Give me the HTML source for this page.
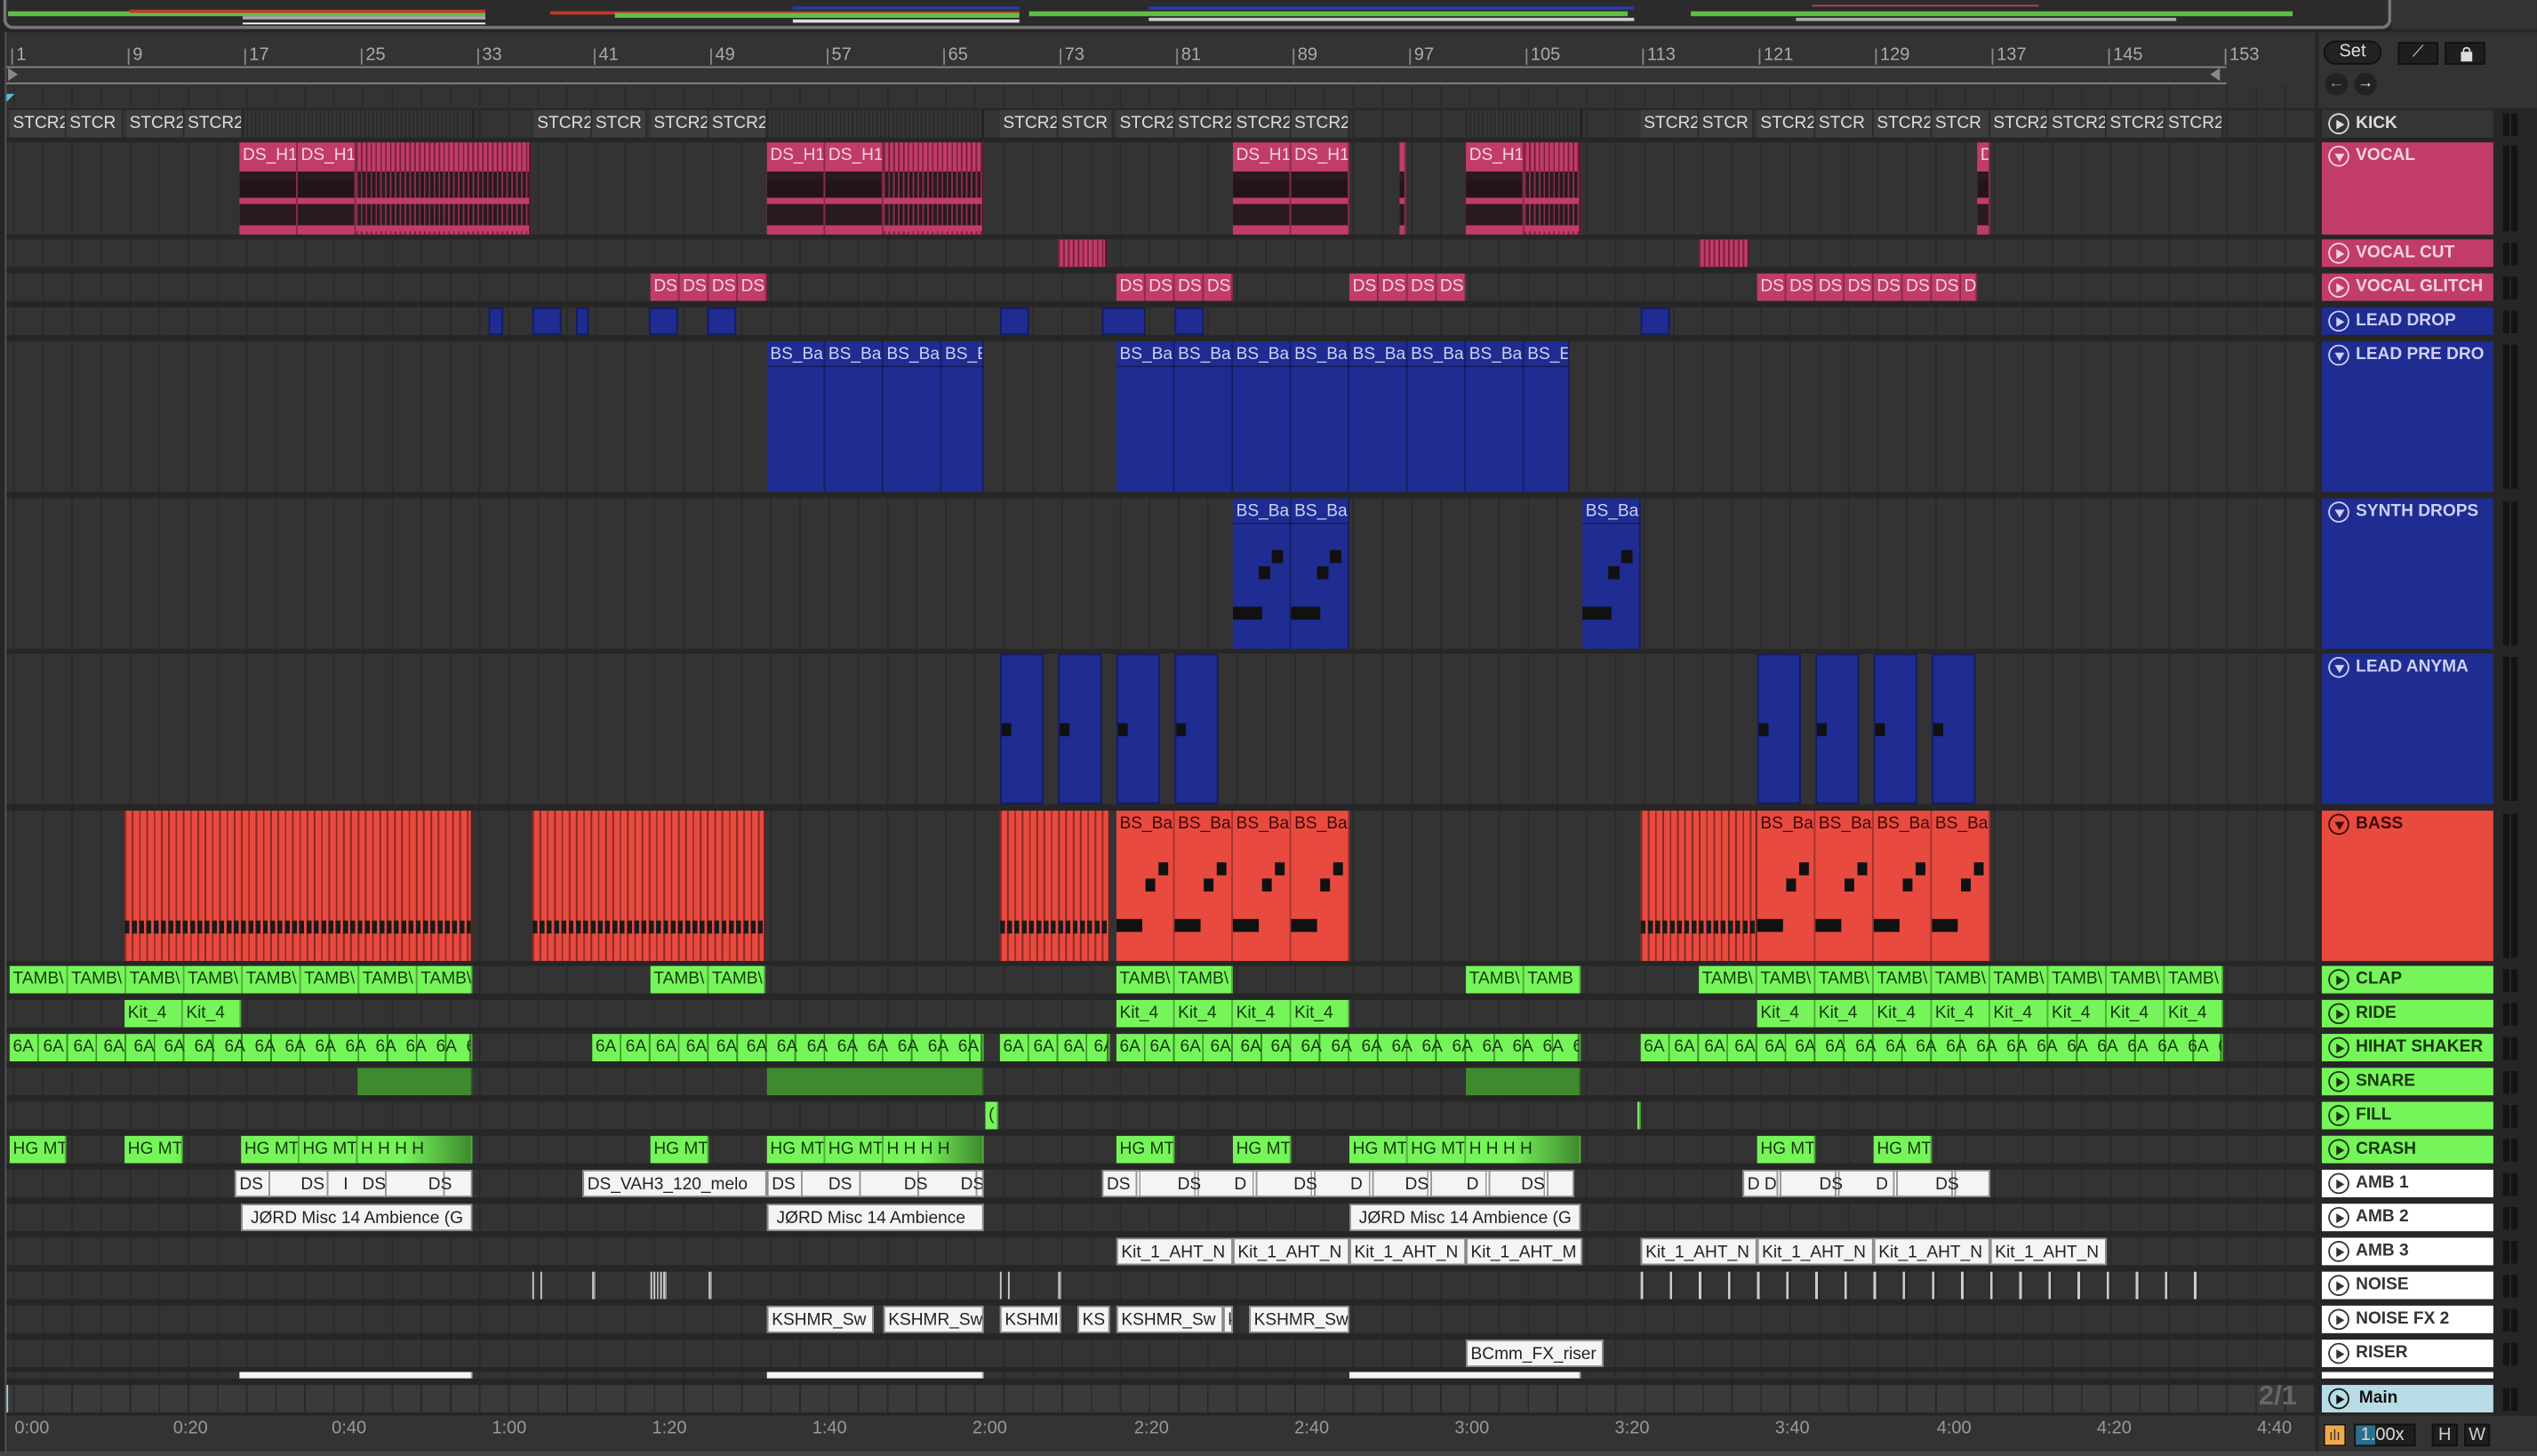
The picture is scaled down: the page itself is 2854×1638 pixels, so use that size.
<!DOCTYPE html>
<html><head><meta charset="utf-8"><style>
*{margin:0;padding:0;box-sizing:border-box}
html,body{width:2854px;height:1638px;overflow:hidden;background:#262626}
#s{position:absolute;left:0;top:0;width:1568px;height:900px;transform:scale(1.82015);transform-origin:0 0;font-family:"Liberation Sans",sans-serif;background:#262626}
.a{position:absolute}
.row{position:absolute;left:4px;width:1427px;background-color:#333;background-image:repeating-linear-gradient(90deg,#2a2a2a 0 1px,transparent 1px 18px);background-position:4px 0;overflow:hidden}
.c{position:absolute;top:0;bottom:0;overflow:hidden;white-space:nowrap;font-size:10.5px;line-height:16px;padding-left:2px;border-right:1px solid rgba(0,0,0,.3)}
.g{background:#3d3d3d;color:#ddd}
.st{background:#363636 repeating-linear-gradient(90deg,#2a2a2a 0 1px,transparent 1px 2.5px)}
.p{background:#c13c6b;color:#f3d3e0}
.pw{background:#c13c6b;color:#f3d3e0}
.pw:after{content:"";position:absolute;left:0;right:0;top:18px;bottom:2px;background:linear-gradient(#2a1a20 0 16%,#241419 16% 44%,#c13c6b 44% 54%,#2a1a20 54% 90%,#c13c6b 90%)}
.pw.ps:after{background:repeating-linear-gradient(90deg,rgba(193,60,107,.6) 0 1px,transparent 1px 3px),linear-gradient(#2a1a20 0 44%,#c13c6b 44% 54%,#2a1a20 54% 90%,#c13c6b 90%)}
.ps{background:#c13c6b repeating-linear-gradient(90deg,#7a1f40 0 1px,transparent 1px 3px)}
.b{background:#1f2c91;color:#cdd0f2;border:1px solid #141c60}
.bb{background:linear-gradient(#1f2c91 0 15px,#141c60 15px 16px,#1f2c91 16px);color:#cdd0f2}
.r{background:#e84a40;color:#3a0a08}
.rs{background:#e84a40 repeating-linear-gradient(90deg,#8a2a22 0 1px,transparent 1px 4.5px)}
.gr{background:#76f55a;color:#17380e}
.dg{background:#3f8a2e}
.w{background:#f4f4f4;color:#222;border:1px solid #888}
.h{position:absolute;left:1435px;width:106px;font-weight:bold;font-size:10.5px;line-height:17px;padding-left:21px;white-space:nowrap;overflow:hidden}
.h i{position:absolute;left:4px;top:2px;width:13px;height:13px;border:1.3px solid currentColor;border-radius:50%}
.h i:after{content:"";position:absolute;left:4px;top:2.5px;border-left:5px solid currentColor;border-top:3.5px solid transparent;border-bottom:3.5px solid transparent}
.h i.d:after{left:2.5px;top:4px;border-top:5px solid currentColor;border-left:3.5px solid transparent;border-right:3.5px solid transparent;border-bottom:0}
.m{position:absolute;left:1547px;width:9px;background:linear-gradient(90deg,#141414 0 4px,transparent 4px 5px,#141414 5px 9px)}
.rl{position:absolute;top:28px;font-size:11px;color:#aaa}
.rl:before{content:"";position:absolute;left:-3px;top:2px;width:1px;height:10px;background:#888}
.tl{position:absolute;top:877px;font-size:11px;color:#999}
</style></head><body><div id="s">

<!-- overview -->
<div class="a" style="left:2px;top:0;width:1476px;height:18px;border:2px solid #777;border-top:0;border-radius:0 0 6px 6px;background:#2b2b2b"></div>
<div class="a" style="left:1478px;top:0;width:90px;height:18px;background:#333"></div>
<div class="a" style="left:5px;top:7px;width:295px;height:3px;background:#5fbf45"></div>
<div class="a" style="left:80px;top:6px;width:220px;height:2px;background:#c0392b"></div>
<div class="a" style="left:150px;top:10px;width:150px;height:2px;background:#aaa"></div>
<div class="a" style="left:150px;top:14px;width:150px;height:1px;background:#fff"></div>
<div class="a" style="left:340px;top:7px;width:290px;height:2px;background:#c0392b"></div>
<div class="a" style="left:380px;top:8px;width:250px;height:3px;background:#5fbf45"></div>
<div class="a" style="left:490px;top:4px;width:140px;height:2px;background:#2a3aa8"></div>
<div class="a" style="left:490px;top:12px;width:140px;height:2px;background:#ddd"></div>
<div class="a" style="left:636px;top:7px;width:370px;height:3px;background:#5fbf45"></div>
<div class="a" style="left:710px;top:4px;width:300px;height:2px;background:#2a3aa8"></div>
<div class="a" style="left:710px;top:11px;width:300px;height:2px;background:#ccc"></div>
<div class="a" style="left:1045px;top:7px;width:372px;height:3px;background:#5fbf45"></div>
<div class="a" style="left:1120px;top:3px;width:140px;height:1px;background:#c13c6b"></div>
<div class="a" style="left:1110px;top:11px;width:235px;height:2px;background:#aaa"></div>

<!-- ruler -->
<div class="a" style="left:4px;top:20px;width:1427px;height:47px;background:#333"></div>
<div class="rl" style="left:10px">1</div><div class="rl" style="left:82px">9</div><div class="rl" style="left:154px">17</div><div class="rl" style="left:226px">25</div><div class="rl" style="left:298px">33</div><div class="rl" style="left:370px">41</div><div class="rl" style="left:442px">49</div><div class="rl" style="left:514px">57</div><div class="rl" style="left:586px">65</div><div class="rl" style="left:658px">73</div><div class="rl" style="left:730px">81</div><div class="rl" style="left:802px">89</div><div class="rl" style="left:874px">97</div><div class="rl" style="left:946px">105</div><div class="rl" style="left:1018px">113</div><div class="rl" style="left:1090px">121</div><div class="rl" style="left:1162px">129</div><div class="rl" style="left:1234px">137</div><div class="rl" style="left:1306px">145</div><div class="rl" style="left:1378px">153</div>
<div class="a" style="left:4px;top:41px;width:1372px;height:11px;border-top:1px solid #888;border-bottom:1px solid #888"></div>
<div class="a" style="left:5px;top:42px;width:0;height:0;border-left:6px solid #888;border-top:4px solid transparent;border-bottom:4px solid transparent"></div>
<div class="a" style="left:1366px;top:42px;width:0;height:0;border-right:6px solid #888;border-top:4px solid transparent;border-bottom:4px solid transparent"></div>
<div class="a" style="left:4px;top:53px;width:1427px;height:13px;background:#333;background-image:repeating-linear-gradient(90deg,#2a2a2a 0 1px,transparent 1px 18px);background-position:4px 0"></div>
<div class="a" style="left:4px;top:58px;border-left:5px solid #4fc3e0;border-bottom:5px solid transparent"></div>
<div class="a" style="left:1433px;top:20px;width:135px;height:47px;background:#333"></div>
<div class="a" style="left:1436px;top:25px;width:36px;height:15px;border-radius:8px;background:#222;border:1px solid #111;color:#ddd;font-size:11px;text-align:center;line-height:13px">Set</div>
<div class="a" style="left:1482px;top:26px;width:25px;height:14px;background:#1e1e1e;border:1px solid #111;color:#ddd;font-size:10px;text-align:center;line-height:12px">⟋</div>
<div class="a" style="left:1511px;top:26px;width:25px;height:14px;background:#1e1e1e;border:1px solid #111"><div class="a" style="left:9px;top:5px;width:7px;height:6px;background:#ddd"></div><div class="a" style="left:10px;top:2px;width:5px;height:5px;border:1.3px solid #ddd;border-bottom:0;border-radius:3px 3px 0 0"></div></div>
<div class="a" style="left:1437px;top:45px;width:14px;height:14px;border-radius:50%;background:#222;color:#888;font-size:10px;text-align:center;line-height:14px">←</div>
<div class="a" style="left:1455px;top:45px;width:14px;height:14px;border-radius:50%;background:#222;color:#ddd;font-size:10px;text-align:center;line-height:14px">→</div>

<!-- KICK -->
<div class="row" style="top:68px;height:17px">
<div class="c g" style="left:2px;width:35px">STCR2</div><div class="c g" style="left:37px;width:35px">STCR</div><div class="c g" style="left:74px;width:36px">STCR2</div><div class="c g" style="left:110px;width:36px">STCR2</div><div class="c st" style="left:146px;width:143px"></div>
<div class="c g" style="left:326px;width:36px">STCR2</div><div class="c g" style="left:362px;width:34px">STCR</div><div class="c g" style="left:398px;width:36px">STCR2</div><div class="c g" style="left:434px;width:36px">STCR2</div><div class="c st" style="left:470px;width:134px"></div>
<div class="c g" style="left:614px;width:36px">STCR2</div><div class="c g" style="left:650px;width:34px">STCR</div><div class="c g" style="left:686px;width:36px">STCR2</div><div class="c g" style="left:722px;width:36px">STCR2</div><div class="c g" style="left:758px;width:36px">STCR2</div><div class="c g" style="left:794px;width:36px">STCR2</div><div class="c st" style="left:902px;width:72px"></div>
<div class="c g" style="left:1010px;width:36px">STCR2</div><div class="c g" style="left:1046px;width:34px">STCR</div><div class="c g" style="left:1082px;width:36px">STCR2</div><div class="c g" style="left:1118px;width:36px">STCR</div><div class="c g" style="left:1154px;width:36px">STCR2</div><div class="c g" style="left:1190px;width:36px">STCR</div><div class="c g" style="left:1226px;width:36px">STCR2</div><div class="c g" style="left:1262px;width:36px">STCR2</div><div class="c g" style="left:1298px;width:36px">STCR2</div><div class="c g" style="left:1334px;width:36px">STCR2</div>
</div>

<!-- VOCAL -->
<div class="row" style="top:88px;height:57px">
<div class="c pw" style="left:144px;width:36px">DS_H1</div><div class="c pw" style="left:180px;width:36px">DS_H1</div><div class="c ps pw" style="left:216px;width:108px"></div>
<div class="c pw" style="left:470px;width:36px">DS_H1</div><div class="c pw" style="left:506px;width:36px">DS_H1</div><div class="c ps pw" style="left:542px;width:62px"></div>
<div class="c pw" style="left:758px;width:36px">DS_H1</div><div class="c pw" style="left:794px;width:36px">DS_H1</div>
<div class="c pw" style="left:861px;width:4px"></div>
<div class="c pw" style="left:902px;width:36px">DS_H1</div><div class="c ps pw" style="left:938px;width:35px"></div>
<div class="c pw" style="left:1218px;width:8px">D</div>
</div>
<!-- VOCAL CUT -->
<div class="row" style="top:148px;height:17px">
<div class="c ps" style="left:650px;width:30px"></div><div class="c ps" style="left:1046px;width:31px"></div>
</div>
<!-- VOCAL GLITCH -->
<div class="row" style="top:169px;height:17px">
<div class="c p" style="left:398px;width:18px">DS</div><div class="c p" style="left:416px;width:18px">DS</div><div class="c p" style="left:434px;width:18px">DS</div><div class="c p" style="left:452px;width:18px">DS</div>
<div class="c p" style="left:686px;width:18px">DS</div><div class="c p" style="left:704px;width:18px">DS</div><div class="c p" style="left:722px;width:18px">DS</div><div class="c p" style="left:740px;width:18px">DS</div>
<div class="c p" style="left:830px;width:18px">DS</div><div class="c p" style="left:848px;width:18px">DS</div><div class="c p" style="left:866px;width:18px">DS</div><div class="c p" style="left:884px;width:18px">DS</div>
<div class="c p" style="left:1082px;width:18px">DS</div><div class="c p" style="left:1100px;width:18px">DS</div><div class="c p" style="left:1118px;width:18px">DS</div><div class="c p" style="left:1136px;width:18px">DS</div><div class="c p" style="left:1154px;width:18px">DS</div><div class="c p" style="left:1172px;width:18px">DS</div><div class="c p" style="left:1190px;width:18px">DS</div><div class="c p" style="left:1208px;width:10px">D</div>
</div>
<!-- LEAD DROP -->
<div class="row" style="top:190px;height:17px">
<div class="c b" style="left:298px;width:9px"></div><div class="c b" style="left:325px;width:18px"></div><div class="c b" style="left:352px;width:8px"></div><div class="c b" style="left:397px;width:18px"></div><div class="c b" style="left:433px;width:18px"></div><div class="c b" style="left:614px;width:18px"></div><div class="c b" style="left:677px;width:27px"></div><div class="c b" style="left:722px;width:18px"></div><div class="c b" style="left:1010px;width:18px"></div>
</div>
<!-- LEAD PRE DRO -->
<div class="row" style="top:211px;height:93px">
<div class="c bb" style="left:470px;width:36px">BS_Ba</div><div class="c bb" style="left:506px;width:36px">BS_Ba</div><div class="c bb" style="left:542px;width:36px">BS_Ba</div><div class="c bb" style="left:578px;width:26px">BS_E</div>
<div class="c bb" style="left:686px;width:36px">BS_Ba</div><div class="c bb" style="left:722px;width:36px">BS_Ba</div><div class="c bb" style="left:758px;width:36px">BS_Ba</div><div class="c bb" style="left:794px;width:36px">BS_Ba</div><div class="c bb" style="left:830px;width:36px">BS_Ba</div><div class="c bb" style="left:866px;width:36px">BS_Ba</div><div class="c bb" style="left:902px;width:36px">BS_Ba</div><div class="c bb" style="left:938px;width:28px">BS_E</div>
</div>
<!-- SYNTH DROPS -->
<div class="row" style="top:308px;height:93px">
<div class="c bb" style="left:758px;width:36px">BS_Ba<div class="a" style="left:24px;top:32px;width:7px;height:8px;background:#111"></div><div class="a" style="left:16px;top:42px;width:7px;height:8px;background:#111"></div><div class="a" style="left:0;top:67px;width:18px;height:8px;background:#111"></div></div>
<div class="c bb" style="left:794px;width:36px">BS_Ba<div class="a" style="left:24px;top:32px;width:7px;height:8px;background:#111"></div><div class="a" style="left:16px;top:42px;width:7px;height:8px;background:#111"></div><div class="a" style="left:0;top:67px;width:18px;height:8px;background:#111"></div></div>
<div class="c bb" style="left:974px;width:36px">BS_Ba<div class="a" style="left:24px;top:32px;width:7px;height:8px;background:#111"></div><div class="a" style="left:16px;top:42px;width:7px;height:8px;background:#111"></div><div class="a" style="left:0;top:67px;width:18px;height:8px;background:#111"></div></div>
</div>
<!-- LEAD ANYMA -->
<div class="row" style="top:404px;height:93px">
<div class="c b" style="left:614px;width:27px"><div class="a" style="left:0;top:42px;width:6px;height:8px;background:#111"></div></div>
<div class="c b" style="left:650px;width:27px"><div class="a" style="left:0;top:42px;width:6px;height:8px;background:#111"></div></div>
<div class="c b" style="left:686px;width:27px"><div class="a" style="left:0;top:42px;width:6px;height:8px;background:#111"></div></div>
<div class="c b" style="left:722px;width:27px"><div class="a" style="left:0;top:42px;width:6px;height:8px;background:#111"></div></div>
<div class="c b" style="left:1082px;width:27px"><div class="a" style="left:0;top:42px;width:6px;height:8px;background:#111"></div></div>
<div class="c b" style="left:1118px;width:27px"><div class="a" style="left:0;top:42px;width:6px;height:8px;background:#111"></div></div>
<div class="c b" style="left:1154px;width:27px"><div class="a" style="left:0;top:42px;width:6px;height:8px;background:#111"></div></div>
<div class="c b" style="left:1190px;width:27px"><div class="a" style="left:0;top:42px;width:6px;height:8px;background:#111"></div></div>
</div>
<!-- BASS -->
<div class="row" style="top:501px;height:93px">
<div class="c rs" style="left:73px;width:215px"><div class="a" style="left:0;right:0;top:68px;height:8px;background:repeating-linear-gradient(90deg,#1a1a1a 0 3px,transparent 3px 4.5px)"></div></div>
<div class="c rs" style="left:325px;width:144px"><div class="a" style="left:0;right:0;top:68px;height:8px;background:repeating-linear-gradient(90deg,#1a1a1a 0 3px,transparent 3px 4.5px)"></div></div>
<div class="c rs" style="left:614px;width:68px"><div class="a" style="left:0;right:0;top:68px;height:8px;background:repeating-linear-gradient(90deg,#1a1a1a 0 3px,transparent 3px 4.5px)"></div></div>
<div class="c r" style="left:686px;width:36px">BS_Ba<div class="a" style="left:26px;top:32px;width:6px;height:8px;background:#111"></div><div class="a" style="left:18px;top:42px;width:6px;height:8px;background:#111"></div><div class="a" style="left:0;top:67px;width:16px;height:8px;background:#111"></div></div>
<div class="c r" style="left:722px;width:36px">BS_Ba<div class="a" style="left:26px;top:32px;width:6px;height:8px;background:#111"></div><div class="a" style="left:18px;top:42px;width:6px;height:8px;background:#111"></div><div class="a" style="left:0;top:67px;width:16px;height:8px;background:#111"></div></div>
<div class="c r" style="left:758px;width:36px">BS_Ba<div class="a" style="left:26px;top:32px;width:6px;height:8px;background:#111"></div><div class="a" style="left:18px;top:42px;width:6px;height:8px;background:#111"></div><div class="a" style="left:0;top:67px;width:16px;height:8px;background:#111"></div></div>
<div class="c r" style="left:794px;width:36px">BS_Ba<div class="a" style="left:26px;top:32px;width:6px;height:8px;background:#111"></div><div class="a" style="left:18px;top:42px;width:6px;height:8px;background:#111"></div><div class="a" style="left:0;top:67px;width:16px;height:8px;background:#111"></div></div>
<div class="c rs" style="left:1010px;width:72px"><div class="a" style="left:0;right:0;top:68px;height:8px;background:repeating-linear-gradient(90deg,#1a1a1a 0 3px,transparent 3px 4.5px)"></div></div>
<div class="c r" style="left:1082px;width:36px">BS_Ba<div class="a" style="left:26px;top:32px;width:6px;height:8px;background:#111"></div><div class="a" style="left:18px;top:42px;width:6px;height:8px;background:#111"></div><div class="a" style="left:0;top:67px;width:16px;height:8px;background:#111"></div></div>
<div class="c r" style="left:1118px;width:36px">BS_Ba<div class="a" style="left:26px;top:32px;width:6px;height:8px;background:#111"></div><div class="a" style="left:18px;top:42px;width:6px;height:8px;background:#111"></div><div class="a" style="left:0;top:67px;width:16px;height:8px;background:#111"></div></div>
<div class="c r" style="left:1154px;width:36px">BS_Ba<div class="a" style="left:26px;top:32px;width:6px;height:8px;background:#111"></div><div class="a" style="left:18px;top:42px;width:6px;height:8px;background:#111"></div><div class="a" style="left:0;top:67px;width:16px;height:8px;background:#111"></div></div>
<div class="c r" style="left:1190px;width:36px">BS_Ba<div class="a" style="left:26px;top:32px;width:6px;height:8px;background:#111"></div><div class="a" style="left:18px;top:42px;width:6px;height:8px;background:#111"></div><div class="a" style="left:0;top:67px;width:16px;height:8px;background:#111"></div></div>
</div>
<!-- CLAP -->
<div class="row" style="top:597px;height:17px">
<div class="c gr" style="left:2px;width:36px">TAMB\</div><div class="c gr" style="left:38px;width:36px">TAMB\</div><div class="c gr" style="left:74px;width:36px">TAMB\</div><div class="c gr" style="left:110px;width:36px">TAMB\</div><div class="c gr" style="left:146px;width:36px">TAMB\</div><div class="c gr" style="left:182px;width:36px">TAMB\</div><div class="c gr" style="left:218px;width:36px">TAMB\</div><div class="c gr" style="left:254px;width:34px">TAMB\</div>
<div class="c gr" style="left:398px;width:36px">TAMB\</div><div class="c gr" style="left:434px;width:35px">TAMB\</div>
<div class="c gr" style="left:686px;width:36px">TAMB\</div><div class="c gr" style="left:722px;width:36px">TAMB\</div>
<div class="c gr" style="left:902px;width:36px">TAMB\</div><div class="c gr" style="left:938px;width:35px">TAMB</div>
<div class="c gr" style="left:1046px;width:36px">TAMB\</div><div class="c gr" style="left:1082px;width:36px">TAMB\</div><div class="c gr" style="left:1118px;width:36px">TAMB\</div><div class="c gr" style="left:1154px;width:36px">TAMB\</div><div class="c gr" style="left:1190px;width:36px">TAMB\</div><div class="c gr" style="left:1226px;width:36px">TAMB\</div><div class="c gr" style="left:1262px;width:36px">TAMB\</div><div class="c gr" style="left:1298px;width:36px">TAMB\</div><div class="c gr" style="left:1334px;width:36px">TAMB\</div>
</div>
<!-- RIDE -->
<div class="row" style="top:618px;height:17px">
<div class="c gr" style="left:73px;width:36px">Kit_4</div><div class="c gr" style="left:109px;width:36px">Kit_4</div>
<div class="c gr" style="left:686px;width:36px">Kit_4</div><div class="c gr" style="left:722px;width:36px">Kit_4</div><div class="c gr" style="left:758px;width:36px">Kit_4</div><div class="c gr" style="left:794px;width:36px">Kit_4</div>
<div class="c gr" style="left:1082px;width:36px">Kit_4</div><div class="c gr" style="left:1118px;width:36px">Kit_4</div><div class="c gr" style="left:1154px;width:36px">Kit_4</div><div class="c gr" style="left:1190px;width:36px">Kit_4</div><div class="c gr" style="left:1226px;width:36px">Kit_4</div><div class="c gr" style="left:1262px;width:36px">Kit_4</div><div class="c gr" style="left:1298px;width:36px">Kit_4</div><div class="c gr" style="left:1334px;width:36px">Kit_4</div>
</div>
<!-- HIHAT -->
<div class="row" style="top:639px;height:17px">
<div class="c gr" style="left:2px;width:286px;background:#76f55a repeating-linear-gradient(90deg,#3a8a2a 0 1px,transparent 1px 18px);background-position:-1px 0">6A&nbsp;&nbsp;6A&nbsp;&nbsp;6A&nbsp;&nbsp;6A&nbsp;&nbsp;6A&nbsp;&nbsp;6A&nbsp;&nbsp;6A&nbsp;&nbsp;6A&nbsp;&nbsp;6A&nbsp;&nbsp;6A&nbsp;&nbsp;6A&nbsp;&nbsp;6A&nbsp;&nbsp;6A&nbsp;&nbsp;6A&nbsp;&nbsp;6A&nbsp;&nbsp;6A</div>
<div class="c gr" style="left:362px;width:242px;background:#76f55a repeating-linear-gradient(90deg,#3a8a2a 0 1px,transparent 1px 18px);background-position:-1px 0">6A&nbsp;&nbsp;6A&nbsp;&nbsp;6A&nbsp;&nbsp;6A&nbsp;&nbsp;6A&nbsp;&nbsp;6A&nbsp;&nbsp;6A&nbsp;&nbsp;6A&nbsp;&nbsp;6A&nbsp;&nbsp;6A&nbsp;&nbsp;6A&nbsp;&nbsp;6A&nbsp;&nbsp;6A&nbsp;&nbsp;6A</div>
<div class="c gr" style="left:614px;width:68px;background:#76f55a repeating-linear-gradient(90deg,#3a8a2a 0 1px,transparent 1px 18px);background-position:-1px 0">6A&nbsp;&nbsp;6A&nbsp;&nbsp;6A&nbsp;&nbsp;6A</div>
<div class="c gr" style="left:686px;width:287px;background:#76f55a repeating-linear-gradient(90deg,#3a8a2a 0 1px,transparent 1px 18px);background-position:-1px 0">6A&nbsp;&nbsp;6A&nbsp;&nbsp;6A&nbsp;&nbsp;6A&nbsp;&nbsp;6A&nbsp;&nbsp;6A&nbsp;&nbsp;6A&nbsp;&nbsp;6A&nbsp;&nbsp;6A&nbsp;&nbsp;6A&nbsp;&nbsp;6A&nbsp;&nbsp;6A&nbsp;&nbsp;6A&nbsp;&nbsp;6A&nbsp;&nbsp;6A&nbsp;&nbsp;6A</div>
<div class="c gr" style="left:1010px;width:360px;background:#76f55a repeating-linear-gradient(90deg,#3a8a2a 0 1px,transparent 1px 18px);background-position:-1px 0">6A&nbsp;&nbsp;6A&nbsp;&nbsp;6A&nbsp;&nbsp;6A&nbsp;&nbsp;6A&nbsp;&nbsp;6A&nbsp;&nbsp;6A&nbsp;&nbsp;6A&nbsp;&nbsp;6A&nbsp;&nbsp;6A&nbsp;&nbsp;6A&nbsp;&nbsp;6A&nbsp;&nbsp;6A&nbsp;&nbsp;6A&nbsp;&nbsp;6A&nbsp;&nbsp;6A&nbsp;&nbsp;6A&nbsp;&nbsp;6A&nbsp;&nbsp;6A&nbsp;&nbsp;6A</div>
</div>
<!-- SNARE -->
<div class="row" style="top:660px;height:17px">
<div class="c dg" style="left:217px;width:71px"></div><div class="c dg" style="left:470px;width:134px"></div><div class="c dg" style="left:902px;width:71px"></div>
</div>
<!-- FILL -->
<div class="row" style="top:681px;height:17px">
<div class="c gr" style="left:605px;width:8px">(</div><div class="c gr" style="left:1008px;width:2px;padding:0"></div>
</div>
<!-- CRASH -->
<div class="row" style="top:702px;height:17px">
<div class="c gr" style="left:2px;width:35px">HG MT</div><div class="c gr" style="left:73px;width:36px">HG MT</div><div class="c gr" style="left:145px;width:36px">HG MT</div><div class="c gr" style="left:181px;width:36px">HG MT</div><div class="c gr" style="left:217px;width:71px;background:#76f55a linear-gradient(90deg,transparent 40%,#3f8a2e)">H H H H</div>
<div class="c gr" style="left:398px;width:36px">HG MT</div>
<div class="c gr" style="left:470px;width:36px">HG MT</div><div class="c gr" style="left:506px;width:36px">HG MT</div><div class="c gr" style="left:542px;width:62px;background:#76f55a linear-gradient(90deg,transparent 40%,#3f8a2e)">H H H H</div>
<div class="c gr" style="left:686px;width:36px">HG MT</div><div class="c gr" style="left:758px;width:36px">HG MT</div>
<div class="c gr" style="left:830px;width:36px">HG MT</div><div class="c gr" style="left:866px;width:36px">HG MT</div><div class="c gr" style="left:902px;width:71px;background:#76f55a linear-gradient(90deg,transparent 40%,#3f8a2e)">H H H H</div>
<div class="c gr" style="left:1082px;width:36px">HG MT</div><div class="c gr" style="left:1154px;width:36px">HG MT</div>
</div>
<!-- AMB1 -->
<div class="row" style="top:723px;height:17px">
<div class="c w" style="left:141px;width:147px;background:#f4f4f4 repeating-linear-gradient(90deg,transparent 0 20px,#999 20px 21px,transparent 21px 36px)">DS&nbsp;&nbsp;&nbsp;&nbsp;&nbsp;&nbsp;&nbsp;&nbsp;DS&nbsp;&nbsp;&nbsp;&nbsp;I&nbsp;&nbsp;&nbsp;DS&nbsp;&nbsp;&nbsp;&nbsp;&nbsp;&nbsp;&nbsp;&nbsp;&nbsp;DS</div>
<div class="c w" style="left:356px;width:114px">DS_VAH3_120_melo</div>
<div class="c w" style="left:470px;width:134px;background:#f4f4f4 repeating-linear-gradient(90deg,transparent 0 20px,#999 20px 21px,transparent 21px 36px)">DS&nbsp;&nbsp;&nbsp;&nbsp;&nbsp;&nbsp;&nbsp;DS&nbsp;&nbsp;&nbsp;&nbsp;&nbsp;&nbsp;&nbsp;&nbsp;&nbsp;&nbsp;&nbsp;DS&nbsp;&nbsp;&nbsp;&nbsp;&nbsp;&nbsp;&nbsp;DS</div>
<div class="c w" style="left:677px;width:292px;background:#f4f4f4 repeating-linear-gradient(90deg,transparent 0 20px,#999 20px 21px,#fff 21px 22px,#999 22px 23px,transparent 23px 36px)">DS&nbsp;&nbsp;&nbsp;&nbsp;&nbsp;&nbsp;&nbsp;&nbsp;&nbsp;&nbsp;DS&nbsp;&nbsp;&nbsp;&nbsp;&nbsp;&nbsp;&nbsp;D&nbsp;&nbsp;&nbsp;&nbsp;&nbsp;&nbsp;&nbsp;&nbsp;&nbsp;&nbsp;DS&nbsp;&nbsp;&nbsp;&nbsp;&nbsp;&nbsp;&nbsp;D&nbsp;&nbsp;&nbsp;&nbsp;&nbsp;&nbsp;&nbsp;&nbsp;&nbsp;DS&nbsp;&nbsp;&nbsp;&nbsp;&nbsp;&nbsp;&nbsp;&nbsp;D&nbsp;&nbsp;&nbsp;&nbsp;&nbsp;&nbsp;&nbsp;&nbsp;&nbsp;DS</div>
<div class="c w" style="left:1073px;width:153px;background:#f4f4f4 repeating-linear-gradient(90deg,transparent 0 20px,#999 20px 21px,#fff 21px 22px,#999 22px 23px,transparent 23px 36px)">D D&nbsp;&nbsp;&nbsp;&nbsp;&nbsp;&nbsp;&nbsp;&nbsp;&nbsp;DS&nbsp;&nbsp;&nbsp;&nbsp;&nbsp;&nbsp;&nbsp;D&nbsp;&nbsp;&nbsp;&nbsp;&nbsp;&nbsp;&nbsp;&nbsp;&nbsp;&nbsp;DS</div>
</div>
<!-- AMB2 -->
<div class="row" style="top:744px;height:17px">
<div class="c w" style="left:145px;width:143px">&nbsp;JØRD Misc 14 Ambience (G</div><div class="c w" style="left:470px;width:134px">&nbsp;JØRD Misc 14 Ambience</div><div class="c w" style="left:830px;width:143px">&nbsp;JØRD Misc 14 Ambience (G</div>
</div>
<!-- AMB3 -->
<div class="row" style="top:765px;height:17px">
<div class="c w" style="left:686px;width:72px">Kit_1_AHT_N</div><div class="c w" style="left:758px;width:72px">Kit_1_AHT_N</div><div class="c w" style="left:830px;width:72px">Kit_1_AHT_N</div><div class="c w" style="left:902px;width:72px">Kit_1_AHT_M</div>
<div class="c w" style="left:1010px;width:72px">Kit_1_AHT_N</div><div class="c w" style="left:1082px;width:72px">Kit_1_AHT_N</div><div class="c w" style="left:1154px;width:72px">Kit_1_AHT_N</div><div class="c w" style="left:1226px;width:72px">Kit_1_AHT_N</div>
</div>
<!-- NOISE -->
<div class="row" style="top:786px;height:17px">
<div class="c" style="left:325px;width:6px;border-left:1px solid #ccc;border-right:1px solid #ccc;padding:0"></div><div class="c" style="left:362px;width:2px;background:#ccc;padding:0"></div><div class="c" style="left:398px;width:10px;background:repeating-linear-gradient(90deg,#ccc 0 1px,transparent 1px 2px);padding:0"></div><div class="c" style="left:434px;width:2px;background:#ccc;padding:0"></div>
<div class="c" style="left:614px;width:6px;border-left:1px solid #ccc;border-right:1px solid #ccc;padding:0"></div><div class="c" style="left:650px;width:2px;background:#ccc;padding:0"></div>
<div class="c" style="left:1010px;width:345px;background:repeating-linear-gradient(90deg,#ccc 0 1.5px,transparent 1.5px 18px);padding:0;border:0"></div>
</div>
<!-- NOISE FX 2 -->
<div class="row" style="top:807px;height:17px">
<div class="c w" style="left:470px;width:66px">KSHMR_Sw</div><div class="c w" style="left:542px;width:62px">KSHMR_Sw</div><div class="c w" style="left:614px;width:38px">KSHMI</div><div class="c w" style="left:662px;width:20px">KS</div><div class="c w" style="left:686px;width:66px">KSHMR_Sw</div><div class="c w" style="left:752px;width:6px">k</div><div class="c w" style="left:768px;width:62px">KSHMR_Sw</div>
</div>
<!-- RISER -->
<div class="row" style="top:828px;height:17px">
<div class="c w" style="left:902px;width:85px">BCmm_FX_riser</div>
</div>
<!-- partial -->
<div class="row" style="top:848px;height:4px">
<div class="c" style="left:144px;width:144px;background:#f4f4f4"></div><div class="c" style="left:470px;width:134px;background:#f4f4f4"></div><div class="c" style="left:830px;width:143px;background:#f4f4f4"></div>
</div>
<!-- main lane -->
<div class="row" style="top:856px;height:17px;background-color:#3a3a3a"></div>
<div class="a" style="left:4px;top:856px;width:1px;height:17px;background:#9fd6e6"></div>
<div class="a" style="left:1396px;top:853px;font-size:17px;font-weight:bold;color:#666">2/1</div>

<!-- time ruler -->
<div class="a" style="left:4px;top:875px;width:1427px;height:22px;background:#333"></div>
<div class="a" style="left:0;top:897px;width:1568px;height:3px;background:#444"></div>
<div class="a" style="left:3px;top:20px;width:1px;height:878px;background:#555"></div>
<div class="tl" style="left:9px">0:00</div><div class="tl" style="left:107px">0:20</div><div class="tl" style="left:205px">0:40</div><div class="tl" style="left:304px">1:00</div><div class="tl" style="left:403px">1:20</div><div class="tl" style="left:502px">1:40</div><div class="tl" style="left:601px">2:00</div><div class="tl" style="left:701px">2:20</div><div class="tl" style="left:800px">2:40</div><div class="tl" style="left:899px">3:00</div><div class="tl" style="left:998px">3:20</div><div class="tl" style="left:1097px">3:40</div><div class="tl" style="left:1197px">4:00</div><div class="tl" style="left:1296px">4:20</div><div class="tl" style="left:1395px">4:40</div>
<div class="a" style="left:1433px;top:875px;width:135px;height:22px;background:#333"></div>
<div class="a" style="left:1436px;top:880px;width:14px;height:14px;background:#f0a94a;border:1px solid #111;font-size:9px;text-align:center;line-height:12px;color:#333">ılı</div>
<div class="a" style="left:1455px;top:880px;width:38px;height:14px;background:#1e1e1e;border:1px solid #111;font-size:11px;line-height:12px;color:#ddd"><span style="background:#2b6f8a;padding-left:3px">1.</span>00x</div>
<div class="a" style="left:1503px;top:880px;width:16px;height:14px;background:#1e1e1e;border:1px solid #111;font-size:11px;text-align:center;line-height:12px;color:#ccc">H</div>
<div class="a" style="left:1523px;top:880px;width:16px;height:14px;background:#1e1e1e;border:1px solid #111;font-size:11px;text-align:center;line-height:12px;color:#ccc">W</div>

<!-- headers -->
<div class="h" style="top:68px;height:17px;background:#353535;color:#ddd"><i></i>KICK</div>
<div class="h" style="top:88px;height:57px;background:#c13c6b;color:#f3d3e0"><i class="d"></i>VOCAL</div>
<div class="h" style="top:148px;height:17px;background:#c13c6b;color:#f3d3e0"><i></i>VOCAL CUT</div>
<div class="h" style="top:169px;height:17px;background:#c13c6b;color:#f3d3e0"><i></i>VOCAL GLITCH</div>
<div class="h" style="top:190px;height:17px;background:#1f2c91;color:#cdd0f2"><i></i>LEAD DROP</div>
<div class="h" style="top:211px;height:93px;background:#1f2c91;color:#cdd0f2"><i class="d"></i>LEAD PRE DRO</div>
<div class="h" style="top:308px;height:93px;background:#1f2c91;color:#cdd0f2"><i class="d"></i>SYNTH DROPS</div>
<div class="h" style="top:404px;height:93px;background:#1f2c91;color:#cdd0f2"><i class="d"></i>LEAD ANYMA</div>
<div class="h" style="top:501px;height:93px;background:#e84a40;color:#3a0a08"><i class="d"></i>BASS</div>
<div class="h" style="top:597px;height:17px;background:#76f55a;color:#17380e"><i></i>CLAP</div>
<div class="h" style="top:618px;height:17px;background:#76f55a;color:#17380e"><i></i>RIDE</div>
<div class="h" style="top:639px;height:17px;background:#76f55a;color:#17380e"><i></i>HIHAT SHAKER</div>
<div class="h" style="top:660px;height:17px;background:#76f55a;color:#17380e"><i></i>SNARE</div>
<div class="h" style="top:681px;height:17px;background:#76f55a;color:#17380e"><i></i>FILL</div>
<div class="h" style="top:702px;height:17px;background:#76f55a;color:#17380e"><i></i>CRASH</div>
<div class="h" style="top:723px;height:17px;background:#fff;color:#333"><i></i>AMB 1</div>
<div class="h" style="top:744px;height:17px;background:#fff;color:#333"><i></i>AMB 2</div>
<div class="h" style="top:765px;height:17px;background:#fff;color:#333"><i></i>AMB 3</div>
<div class="h" style="top:786px;height:17px;background:#fff;color:#333"><i></i>NOISE</div>
<div class="h" style="top:807px;height:17px;background:#fff;color:#333"><i></i>NOISE FX 2</div>
<div class="h" style="top:828px;height:17px;background:#fff;color:#333"><i></i>RISER</div>
<div class="h" style="top:848px;height:4px;background:#fff"></div>
<div class="h" style="top:856px;height:17px;background:#b8dce6;color:#111;padding-left:23px"><i></i>Main</div>

<!-- meters -->
<div class="m" style="top:70px;height:14px"></div><div class="m" style="top:90px;height:53px"></div><div class="m" style="top:150px;height:14px"></div><div class="m" style="top:171px;height:14px"></div><div class="m" style="top:192px;height:14px"></div><div class="m" style="top:213px;height:89px"></div><div class="m" style="top:310px;height:89px"></div><div class="m" style="top:406px;height:89px"></div><div class="m" style="top:503px;height:89px"></div>
<div class="m" style="top:599px;height:14px"></div><div class="m" style="top:620px;height:14px"></div><div class="m" style="top:641px;height:14px"></div><div class="m" style="top:662px;height:14px"></div><div class="m" style="top:683px;height:14px"></div><div class="m" style="top:704px;height:14px"></div><div class="m" style="top:725px;height:14px"></div><div class="m" style="top:746px;height:14px"></div><div class="m" style="top:767px;height:14px"></div><div class="m" style="top:788px;height:14px"></div><div class="m" style="top:809px;height:14px"></div><div class="m" style="top:830px;height:14px"></div><div class="m" style="top:858px;height:14px"></div>
</div></body></html>
